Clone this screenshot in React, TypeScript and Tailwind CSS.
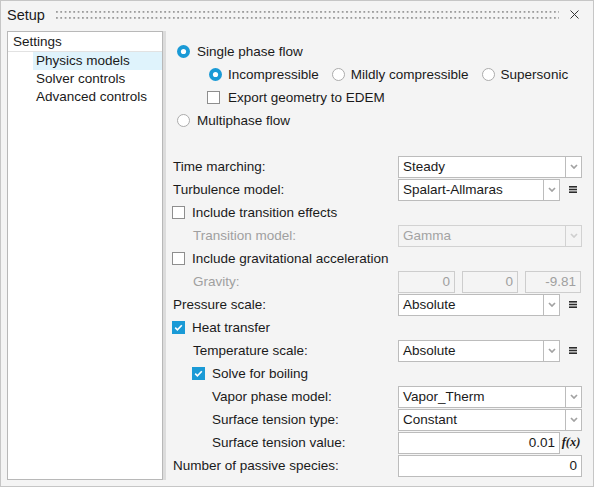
import React from 'react';

const BLUE = '#1a9ad6';

const Radio: React.FC<{ checked?: boolean }> = ({ checked }) => (
  <svg width="13" height="13" viewBox="0 0 13 13" className="shrink-0">
    {checked ? (
      <>
        <circle cx="6.5" cy="6.5" r="6.5" fill={BLUE} />
        <circle cx="6.5" cy="6.5" r="2.6" fill="#fff" />
      </>
    ) : (
      <circle cx="6.5" cy="6.5" r="6" fill="#fff" stroke="#ababab" strokeWidth="1" />
    )}
  </svg>
);

const Check: React.FC<{ checked?: boolean }> = ({ checked }) => (
  <svg width="13" height="13" viewBox="0 0 13 13" className="shrink-0">
    {checked ? (
      <>
        <rect x="0" y="0" width="13" height="13" fill={BLUE} />
        <path d="M3.2 6.6 L5.4 8.8 L9.8 4.2" stroke="#fff" strokeWidth="1.6" fill="none" />
      </>
    ) : (
      <rect x="0.5" y="0.5" width="12" height="12" fill="#fff" stroke="#8e8e8e" strokeWidth="1" />
    )}
  </svg>
);

const Chevron: React.FC<{ disabled?: boolean }> = ({ disabled }) => (
  <svg width="8" height="5" viewBox="0 0 8 5">
    <path d="M1 1 L4 4 L7 1" stroke={disabled ? '#cfcfcf' : '#a2a2a2'} strokeWidth="1.7" fill="none" />
  </svg>
);

const MenuIcon = () => (
  <div className="ml-[4px] w-[18px] h-[22px] flex items-center justify-center">
    <svg width="8" height="7" viewBox="0 0 8 7">
      <rect x="0" y="0" width="8" height="1.6" fill="#2b2b2b" />
      <rect x="0" y="2.7" width="8" height="1.6" fill="#2b2b2b" />
      <rect x="0" y="5.4" width="8" height="1.6" fill="#2b2b2b" />
    </svg>
  </div>
);

const Select: React.FC<{ value: string; short?: boolean; disabled?: boolean }> = ({ value, short, disabled }) => (
  <div className="flex">
    <div
      className={
        disabled
          ? 'h-[22px] w-[168px] border border-[#d2d2d2] flex items-center px-[4px] text-[#a3a3a3]'
          : short
          ? 'h-[22px] w-[146px] border border-[#bcbcbc] bg-white flex items-center px-[4px]'
          : 'h-[22px] w-[168px] border border-[#bcbcbc] bg-white flex items-center px-[4px]'
      }
    >
      {value}
    </div>
    <div
      className={
        disabled
          ? 'h-[22px] w-[16px] border-y border-r border-[#d2d2d2] flex items-center justify-center'
          : 'h-[22px] w-[16px] border-y border-r border-[#bcbcbc] bg-white flex items-center justify-center'
      }
    >
      <Chevron disabled={disabled} />
    </div>
  </div>
);

const Row: React.FC<{ children: React.ReactNode }> = ({ children }) => (
  <div className="h-[23px] flex items-center">{children}</div>
);

const Label: React.FC<{ text: string; indent?: 0 | 1 | 2; disabled?: boolean }> = ({ text, indent = 0, disabled }) => (
  <div
    className={
      (indent === 0 ? 'pl-[1px] ' : indent === 1 ? 'pl-[21px] ' : 'pl-[40px] ') +
      'w-[226px] shrink-0 ' +
      (disabled ? 'text-[#a0a0a0]' : '')
    }
  >
    {text}
  </div>
);

export default function App() {
  return (
    <div className="w-[594px] h-[487px] bg-[#f4f4f4] border border-[#c6c6c6] flex flex-col text-[13.5px] text-[#1a1a1a] font-['Liberation_Sans',Arial,sans-serif] leading-none">
      {/* Title bar */}
      <div className="h-[30px] flex items-center shrink-0">
        <span className="ml-[6px] text-[14.5px] mt-[-1px]">Setup</span>
        <svg className="ml-[11px] mt-[-3px]" width="503" height="9">
          <defs>
            <pattern id="grip" width="4.33" height="9" patternUnits="userSpaceOnUse">
              <rect x="0" y="1" width="1.8" height="1.8" fill="#9c9c9c" />
              <rect x="0" y="7" width="1.8" height="1.8" fill="#9c9c9c" />
            </pattern>
          </defs>
          <rect width="503" height="9" fill="url(#grip)" />
        </svg>
        <svg className="ml-[11px] mt-[-3px]" width="9" height="9" viewBox="0 0 9 9">
          <path d="M0.5 0.5 L8.5 8.5 M8.5 0.5 L0.5 8.5" stroke="#333" strokeWidth="1" />
        </svg>
      </div>

      {/* Body */}
      <div className="flex pl-[6px] pb-[6px] h-[455px]">
        {/* Tree */}
        <div className="w-[156px] h-[449px] border border-[#b8b8b8] bg-white flex flex-col shrink-0">
          <div className="h-[20px] border-b border-[#e2e2e2] flex items-center pl-[5px]">Settings</div>
          <div className="h-[18px] ml-[25px] pl-[3px] bg-[#dff3fc] flex items-center">Physics models</div>
          <div className="h-[18px] ml-[25px] pl-[3px] flex items-center">Solver controls</div>
          <div className="h-[18px] ml-[25px] pl-[3px] flex items-center">Advanced controls</div>
        </div>
        <div className="w-[3px] h-[449px] bg-[#dcdcdc] shrink-0" />

        {/* Right panel */}
        <div className="flex-1 pl-[6px] pt-[9px] flex flex-col">
          <Row>
            <div className="ml-[5px] flex items-center gap-[7px]">
              <Radio checked />
              <span>Single phase flow</span>
            </div>
          </Row>
          <Row>
            <div className="ml-[37px] flex items-center">
              <Radio checked />
              <span className="ml-[6px]">Incompressible</span>
              <span className="ml-[13px]"><Radio /></span>
              <span className="ml-[6px]">Mildly compressible</span>
              <span className="ml-[13px]"><Radio /></span>
              <span className="ml-[6px]">Supersonic</span>
            </div>
          </Row>
          <Row>
            <div className="ml-[35px] flex items-center gap-[8px]">
              <Check />
              <span>Export geometry to EDEM</span>
            </div>
          </Row>
          <Row>
            <div className="ml-[5px] flex items-center gap-[7px]">
              <Radio />
              <span>Multiphase flow</span>
            </div>
          </Row>

          <div className="mt-[23px] flex flex-col">
            <Row>
              <Label text="Time marching:" />
              <Select value="Steady" />
            </Row>
            <Row>
              <Label text="Turbulence model:" />
              <Select value="Spalart-Allmaras" short />
              <MenuIcon />
            </Row>
            <Row>
              <div className="flex items-center gap-[7px]">
                <Check />
                <span>Include transition effects</span>
              </div>
            </Row>
            <Row>
              <Label text="Transition model:" indent={1} disabled />
              <Select value="Gamma" disabled />
            </Row>
            <Row>
              <div className="flex items-center gap-[7px]">
                <Check />
                <span>Include gravitational acceleration</span>
              </div>
            </Row>
            <Row>
              <Label text="Gravity:" indent={1} disabled />
              <div className="flex gap-[7px] text-[#a0a0a0]">
                <div className="h-[22px] w-[57px] border border-[#cdcdcd] flex items-center justify-end pr-[4px]">0</div>
                <div className="h-[22px] w-[56px] border border-[#cdcdcd] flex items-center justify-end pr-[4px]">0</div>
                <div className="h-[22px] w-[56px] border border-[#cdcdcd] flex items-center justify-end pr-[4px]">-9.81</div>
              </div>
            </Row>
            <Row>
              <Label text="Pressure scale:" />
              <Select value="Absolute" short />
              <MenuIcon />
            </Row>
            <Row>
              <div className="flex items-center gap-[7px]">
                <Check checked />
                <span>Heat transfer</span>
              </div>
            </Row>
            <Row>
              <Label text="Temperature scale:" indent={1} />
              <Select value="Absolute" short />
              <MenuIcon />
            </Row>
            <Row>
              <div className="ml-[20px] flex items-center gap-[7px]">
                <Check checked />
                <span>Solve for boiling</span>
              </div>
            </Row>
            <Row>
              <Label text="Vapor phase model:" indent={2} />
              <Select value="Vapor_Therm" />
            </Row>
            <Row>
              <Label text="Surface tension type:" indent={2} />
              <Select value="Constant" />
            </Row>
            <Row>
              <Label text="Surface tension value:" indent={2} />
              <div className="h-[22px] w-[162px] border border-[#bcbcbc] bg-white flex items-center justify-end pr-[4px]">0.01</div>
              <div className="w-[22px] flex justify-center">
                <span className="font-['Liberation_Serif',serif] italic text-[12.5px] font-semibold">f(x)</span>
              </div>
            </Row>
            <Row>
              <Label text="Number of passive species:" />
              <div className="h-[22px] w-[184px] border border-[#bcbcbc] bg-white flex items-center justify-end pr-[4px]">0</div>
            </Row>
          </div>
        </div>
      </div>
    </div>
  );
}
